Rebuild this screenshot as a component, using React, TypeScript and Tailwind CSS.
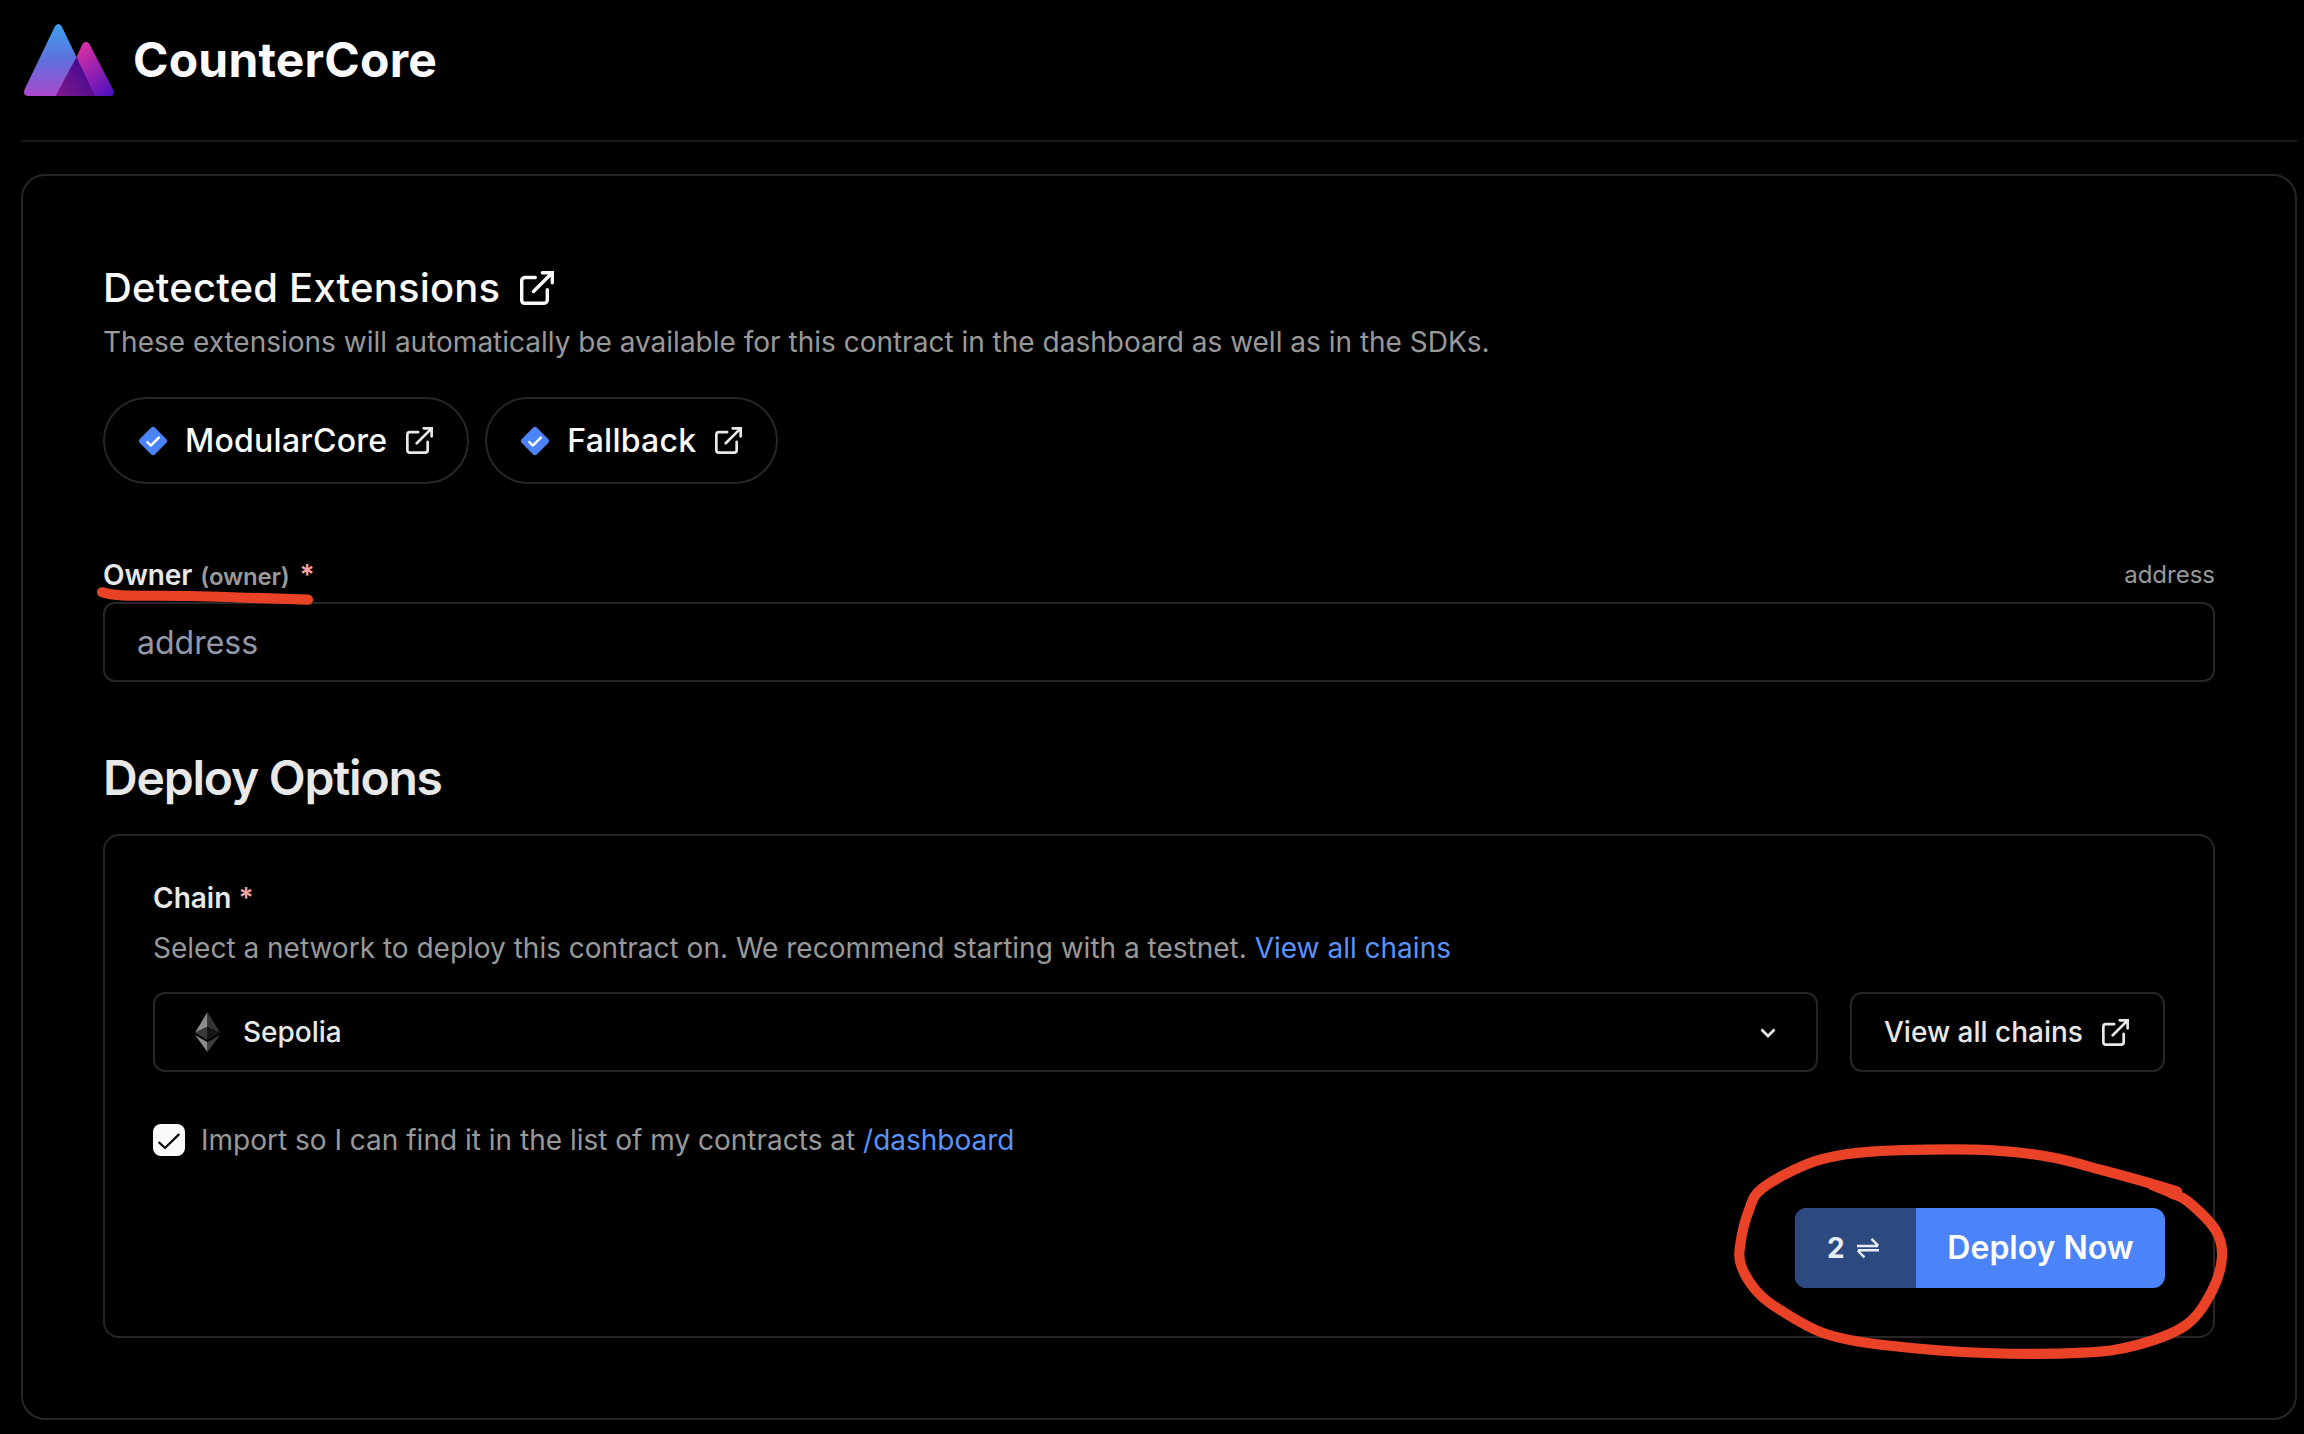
import React from "react";

type Point = [number, number];

/** Smooth curve through a list of points (Catmull-Rom, as cubic segments). */
function smooth(points: Point[]): string {
  let d = `M${points[0][0]} ${points[0][1]}`;
  for (let i = 0; i < points.length - 1; i++) {
    const p0 = points[Math.max(i - 1, 0)];
    const p1 = points[i];
    const p2 = points[i + 1];
    const p3 = points[Math.min(i + 2, points.length - 1)];
    d += `C${p1[0] + (p2[0] - p0[0]) / 6} ${p1[1] + (p2[1] - p0[1]) / 6} ${p2[0] - (p3[0] - p1[0]) / 6} ${p2[1] - (p3[1] - p1[1]) / 6} ${p2[0]} ${p2[1]}`;
  }
  return d;
}

const circleStroke: Point[] = [
  [2177, 1191.3], [2142, 1181], [2102.7, 1170.3], [2052.7, 1157.5], [1992.7, 1150.3], [1902.7, 1150.2],
  [1846, 1154.3], [1806, 1164.5], [1762, 1188.5], [1749, 1210], [1740.5, 1243], [1741, 1265],
  [1756, 1290.5], [1778, 1308.5], [1826, 1334], [1892.7, 1346], [1986, 1353], [2082.7, 1352.7], [2136, 1345.3],
  [2186, 1325], [2212, 1291], [2222, 1256.7], [2215.5, 1230], [2188, 1201.5], [2172, 1193.5], [2152, 1185],
];

const underlineStroke: Point[] = [
  [102, 592.3], [122, 595.3], [190, 596], [250, 597.8], [308, 599.7],
];

function Logo() {
  return (
    <svg className="size-24" viewBox="21 12 96 96">
      <defs>
        <linearGradient id="peak-a" x1="0" y1="0" x2="0" y2="1">
          <stop offset="0" stopColor="#3d9fea" />
          <stop offset="0.5" stopColor="#5f6fdd" />
          <stop offset="1" stopColor="#ac48ce" />
        </linearGradient>
        <linearGradient id="peak-b" x1="0.3" y1="0" x2="0.95" y2="1">
          <stop offset="0" stopColor="#d42fa2" />
          <stop offset="1" stopColor="#4a10c0" />
        </linearGradient>
        <linearGradient id="peak-c" x1="0" y1="1" x2="0.8" y2="0.3">
          <stop offset="0" stopColor="#801a88" />
          <stop offset="1" stopColor="#480a94" />
        </linearGradient>
      </defs>
      <path fill="url(#peak-b)" d="M76.5 57 82.5 44Q86 39.400 89.500 44L113.300 90Q115 96 110.500 96H90Z" />
      <path fill="url(#peak-a)" d="M54.800 26.500Q58.300 21.500 61.800 26.500L76.500 57 95.300 96H28Q22.500 95.500 24.500 89.500Z" />
      <path fill="url(#peak-c)" d="M76.500 57 95.300 96H55.500Z" />
    </svg>
  );
}

function External({ className }: { className: string }) {
  return (
    <svg className={className} viewBox="0 0 34 34" fill="none" stroke="currentColor" strokeWidth="3.4" strokeLinecap="round">
      <path strokeLinejoin="round" d="M15.300 6.500H4.800A3.200 3.200 0 0 0 1.700 9.700V29.200A3.200 3.200 0 0 0 4.800 32.300H24.100A3.200 3.200 0 0 0 27.300 29.200V18.800" />
      <path d="M22.300 1.700H32.300V11.800M32.300 1.700 13.500 20.500" />
    </svg>
  );
}

function Verified() {
  return (
    <svg className="size-8" viewBox="0 0 32 32" fill="none">
      <path fill="#4a84f8" d="M14 2.800Q16 .9 18 2.800L29.200 14Q31.100 16 29.200 18L18 29.200Q16 31.100 14 29.200L2.800 18Q.9 16 2.800 14Z" />
      <path d="M10.300 17 13.800 20.600 21.800 12.600" stroke="#fff" strokeWidth="2.400" strokeLinecap="round" strokeLinejoin="round" />
    </svg>
  );
}

function Extension({ name }: { name: string }) {
  return (
    <a className="flex h-[87px] items-center gap-4 rounded-full border-2 border-[#262626] px-8 text-[32px] font-medium tracking-[0.25px] text-[#fafafa]">
      <Verified />
      {name}
      <span className="flex size-8 items-center justify-center">
        <External className="size-[27px] text-[#e8e8e8]" />
      </span>
    </a>
  );
}

export default function App() {
  return (
    <div className="relative h-[1434px] w-[2304px] overflow-hidden bg-black pt-3 pr-[7px] pl-[21px] font-['Inter',sans-serif] text-[#e8e8e8]">
      <header className="flex h-[130px] items-start gap-4 border-b-2 border-[#1a1a1a]">
        <Logo />
        <h1 className="text-[48px] leading-[96px] font-bold tracking-[0.2px] text-[#fafafa]">CounterCore</h1>
      </header>

      <main className="mt-8 h-[1246px] rounded-[24px] border-2 border-[#262626] px-20 pt-[88px]">
        <section>
          <h2 className="flex h-12 items-center gap-5 text-[40px] font-medium tracking-[0.2px] text-[#fafafa]">
            Detected Extensions
            <External className="size-[34px]" />
          </h2>
          <p className="mt-[10px] text-[28px] leading-10 text-[#999]">
            These extensions will automatically be available for this contract in the dashboard as well as in the SDKs.
          </p>
          <div className="mt-[35px] flex gap-4">
            <Extension name="ModularCore" />
            <Extension name="Fallback" />
          </div>
        </section>

        <section className="mt-[71px]">
          <div className="flex h-10 items-center justify-between">
            <label className="flex items-baseline pt-px text-[28px] leading-10 font-semibold tracking-[-0.1px]">
              Owner
              <span className="ml-2 text-[24px] font-semibold tracking-[-0.2px] text-[#999]">(owner)</span>
              <span className="ml-[10px] text-[#f5a3a3]">*</span>
            </label>
            <span className="text-[24px] text-[#999]">address</span>
          </div>
          <input
            className="mt-[7px] block h-20 w-full rounded-[12px] border-2 border-[#262626] bg-transparent px-8 text-[32px] placeholder:text-[#9298a8]"
            placeholder="address"
          />
        </section>

        <h2 className="mt-[68px] text-[48px] leading-[56px] font-semibold tracking-[-1.2px]">Deploy Options</h2>

        <section className="mt-7 h-[504px] rounded-[16px] border-2 border-[#262626] px-12 pt-[42px]">
          <h3 className="text-[28px] leading-10 font-semibold">
            Chain <span className="text-[#f5a3a3]">*</span>
          </h3>
          <p className="mt-[10px] text-[28px] leading-10 text-[#999]">
            Select a network to deploy this contract on. We recommend starting with a testnet.{" "}
            <a className="text-[#5b93fb]">View all chains</a>
          </p>
          <div className="mt-6 flex gap-8 text-[28px] font-medium">
            <button className="flex h-20 flex-1 items-center rounded-[12px] border-2 border-[#262626] pr-[38px] pl-10">
              <svg className="h-10 w-[25px]" viewBox="0 0 25 40">
                <path fill="#8c8c8c" d="M12.500 0V14.800L0 20.700Z" />
                <path fill="#343434" d="M12.500 0V14.800L25 20.700Z" />
                <path fill="#393939" d="M12.500 14.800V28L0 20.700Z" />
                <path fill="#141414" d="M12.500 14.800V28L25 20.700Z" />
                <path fill="#8c8c8c" d="M0 23.100 12.500 30.200V40Z" />
                <path fill="#3c3c3b" d="M25 23.100 12.500 30.200V40Z" />
              </svg>
              <span className="ml-[23px]">Sepolia</span>
              <svg className="ml-auto h-4 w-5" viewBox="0 0 20 16" fill="none" stroke="currentColor" strokeWidth="2.800">
                <path d="M3.500 5.500 10 12 16.500 5.500" />
              </svg>
            </button>
            <a className="flex h-20 w-[315px] items-center justify-between rounded-[12px] border-2 border-[#262626] pr-[34px] pl-8">
              View all chains
              <External className="size-[27px]" />
            </a>
          </div>
          <label className="mt-[52px] flex h-8 items-center gap-4 text-[28px] text-[#999]">
            <span className="flex size-8 items-center justify-center rounded-[8px] bg-[#fafafa]">
              <svg className="size-8" viewBox="0 0 32 32" fill="none" stroke="#0a0a0a" strokeWidth="2.200" strokeLinecap="round" strokeLinejoin="round">
                <path d="M6.300 18.600 12 24 25.700 10.600" />
              </svg>
            </span>
            <span>
              Import so I can find it in the list of my contracts at <a className="text-[#5b93fb]">/dashboard</a>
            </span>
          </label>
          <div className="mt-[52px] flex justify-end">
            <button className="flex h-20 w-[370px] overflow-hidden rounded-[12px] bg-[#4a84f8] font-semibold text-white">
              <span className="flex h-full w-[121px] items-center gap-3 bg-[#2c4a80] pl-8 text-[28px] font-bold text-[#e9edf7]">
                2
                <svg className="h-5 w-[22px]" viewBox="0 0 22 20" fill="none" stroke="currentColor" strokeWidth="2.400">
                  <path d="M0 8H21M14.500.900 21.300 7.800M22 12.300H1M7.500 19.400.700 12.500" />
                </svg>
              </span>
              <span className="flex h-full flex-1 items-center justify-center text-[32px]">Deploy Now</span>
            </button>
          </div>
        </section>
      </main>

      <svg
        className="pointer-events-none absolute inset-0 h-[1434px] w-[2304px]"
        viewBox="0 0 2304 1434"
        fill="none"
        stroke="#ea4227"
        strokeWidth="10.200"
        strokeLinecap="round"
        strokeLinejoin="round"
      >
        <path d={smooth(underlineStroke)} />
        <path d={smooth(circleStroke)} />
      </svg>
    </div>
  );
}
